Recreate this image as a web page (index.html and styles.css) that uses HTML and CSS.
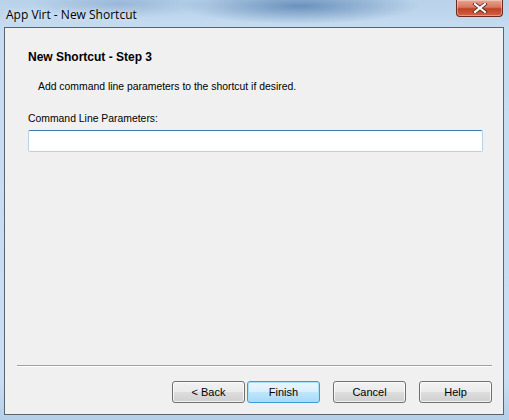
FILE: index.html
```html
<!DOCTYPE html>
<html lang="en">
<head>
    <meta charset="UTF-8">
    <title>App Virt - New Shortcut</title>
    <link rel="stylesheet" href="styles.css">
</head>
<body>
    <div class="window">
        <div class="titlebar">
            <span class="title">App Virt - New Shortcut</span>
            <button class="close-btn">
                <svg width="16" height="10" viewBox="0 0 16 10">
                    <path d="M3 1 L13 9 M13 1 L3 9" stroke="#4a2020" stroke-width="3.6" stroke-linecap="square"/>
                    <path d="M3 1 L13 9 M13 1 L3 9" stroke="#ffffff" stroke-width="2.2" stroke-linecap="square"/>
                </svg>
            </button>
        </div>
        <div class="client">
            <div class="step-title">New Shortcut - Step 3</div>
            <div class="step-desc">Add command line parameters to the shortcut if desired.</div>
            <label class="field-label">Command Line Parameters:</label>
            <input class="field" type="text">
            <div class="spacer"></div>
            <div class="separator"></div>
            <div class="buttons">
                <button class="btn">&lt; Back</button>
                <button class="btn btn-default">Finish</button>
                <button class="btn btn-gap">Cancel</button>
                <button class="btn btn-gap">Help</button>
            </div>
        </div>
    </div>
</body>
</html>
```

FILE: styles.css
```css
/* 基础样式 */
body {
    margin: 0;
    font-family: "Liberation Sans", Arial, sans-serif;
}

.window {
    width: 509px;
    height: 420px;
    display: flex;
    flex-direction: column;
    background:
        radial-gradient(ellipse 120px 18px at 300px 6px, rgba(40, 90, 150, 0.55), rgba(40, 90, 150, 0)),
        radial-gradient(ellipse 90px 14px at 120px 4px, rgba(90, 130, 180, 0.35), rgba(90, 130, 180, 0)),
        linear-gradient(180deg, #b8d2ea 0px, #c6dcf0 30px, #c9def2 380px, #b5cfe9 420px);
}

/* 标题栏 */
.titlebar {
    height: 27px;
    display: flex;
    align-items: flex-start;
    justify-content: space-between;
}

.title {
    margin: 6px 0 0 6px;
    font-family: "Open Sans", "Noto Sans", sans-serif;
    font-size: 12px;
    color: #000;
    text-shadow: 0 0 6px rgba(255, 255, 255, 0.9);
}

.close-btn {
    width: 47px;
    height: 17px;
    margin-right: 6px;
    padding: 0;
    border: 1px solid #6b2a22;
    border-top: none;
    border-radius: 0 0 4px 4px;
    background: linear-gradient(180deg, #e8a493 0%, #d7775f 45%, #c1401f 55%, #d2654a 100%);
    display: flex;
    align-items: center;
    justify-content: center;
    box-shadow: inset 0 0 0 1px rgba(255, 255, 255, 0.35);
}

/* 客户区 */
.client {
    margin-left: 4px;
    width: 498px;
    height: 386px;
    border: 1px solid #5a6470;
    background-color: #f0f0f0;
    display: flex;
    flex-direction: column;
    font-size: 10.4px;
    color: #000;
}

.step-title {
    margin: 22px 0 0 23px;
    font-weight: bold;
    font-size: 12px;
}

.step-desc {
    margin: 17px 0 0 33px;
}

.field-label {
    margin: 21px 0 0 23px;
}

.field {
    margin: 6px 0 0 23px;
    width: 455px;
    height: 22px;
    box-sizing: border-box;
    border: 1px solid #b7d1ea;
    border-top-color: #3d7bad;
    border-radius: 2px;
    background: #fff;
}

.spacer {
    flex: 1;
}

.separator {
    margin: 0 11px 0 12px;
    height: 1px;
    background-color: #a0a0a0;
    border-bottom: 1px solid #fff;
}

.buttons {
    display: flex;
    justify-content: flex-end;
    margin: 14px 11px 11px 0;
}

.btn {
    width: 73px;
    height: 22px;
    margin-left: 2px;
    padding: 0;
    font-family: "Liberation Sans", Arial, sans-serif;
    font-size: 11px;
    color: #000;
    border: 1px solid #707070;
    border-radius: 3px;
    background: linear-gradient(180deg, #f2f2f2 0%, #ebebeb 48%, #dddddd 52%, #cfcfcf 100%);
    box-shadow: inset 0 0 0 1px rgba(255, 255, 255, 0.7);
}

.btn-gap {
    margin-left: 13px;
}

.btn-default {
    border-color: #3c9cd8;
    background: linear-gradient(180deg, #eaf6fd 0%, #d9f0fc 48%, #bee6fd 52%, #a7d9f5 100%);
    box-shadow: inset 0 0 0 1px #a8e0f8;
}
```
